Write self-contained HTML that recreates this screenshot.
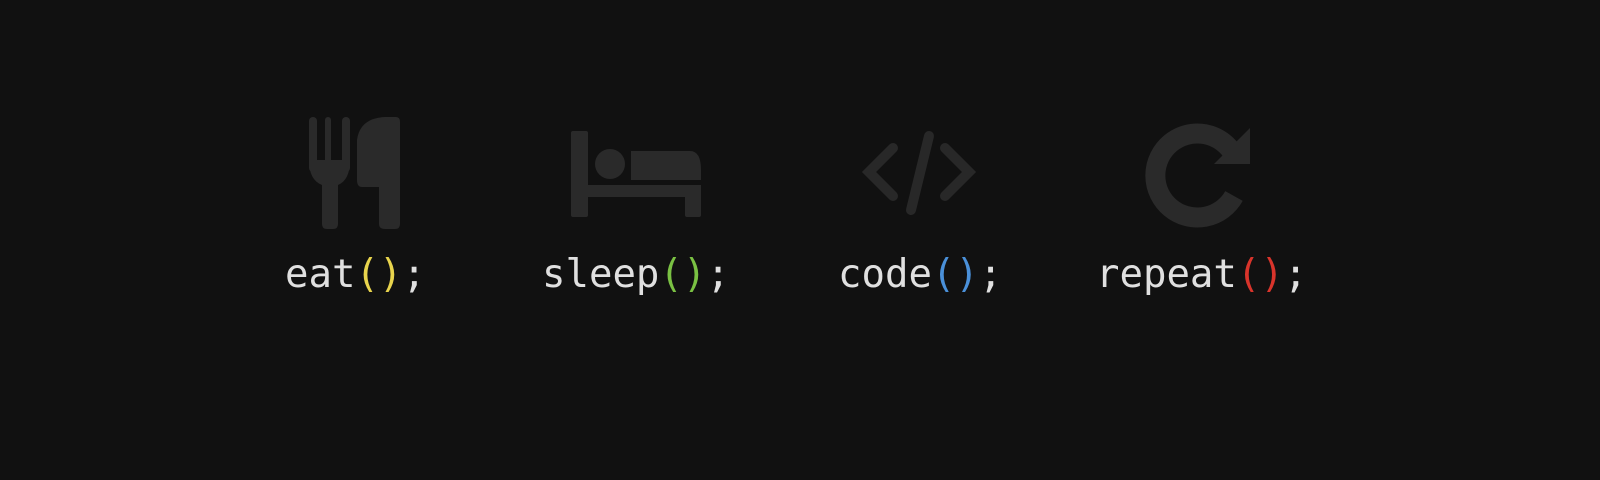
<!DOCTYPE html>
<html><head><style>
html,body{margin:0;padding:0;background:#111111;width:1600px;height:480px;overflow:hidden}
.t{position:absolute;top:252px;font-family:"DejaVu Sans Mono","Liberation Mono",monospace;font-size:39px;color:#e0e0e0;line-height:46px;white-space:pre}
svg{position:absolute;left:0;top:0}
</style></head><body>
<svg width="1600" height="480" fill="#2a2a2a">
<rect x="309" y="117" width="8" height="55" rx="4"/>
<rect x="325" y="117" width="6" height="50" rx="3"/>
<rect x="342" y="117" width="8" height="55" rx="4"/>
<path d="M309 160 Q309 180 322 185 L322 224 Q322 229 327 229 L333 229 Q338 229 338 224 L338 185 Q350 180 350 160 Z"/>
<path d="M357 180 L357 140 Q360 118 385 117 L396 117 Q400 117 400 122 L400 224 Q400 229 395 229 L385 229 Q379 229 379 224 L379 187 L362 187 Q357 187 357 180 Z"/>
<rect x="571" y="131" width="17" height="86" rx="2"/>
<circle cx="610" cy="164" r="15"/>
<path d="M631 151 L690 151 Q701 151 701 170 L701 180 L631 180 Z"/>
<rect x="588" y="185" width="113" height="12"/>
<rect x="685" y="185" width="16" height="32" rx="2"/>
<g stroke="#282828" stroke-width="10" stroke-linecap="round" fill="none">
<path d="M893 148 L869 172 L893 196"/>
<path d="M945 148 L969 172 L945 196"/>
<path d="M929 136 L911 210"/>
</g>
<path d="M1234 155 A42 42 0 1 0 1234 196" stroke="#2a2a2a" stroke-width="20" fill="none"/>
<path d="M1250 128 L1250 164 L1214 164 Z"/>
</svg>
<div class="t" style="left:285px">eat<span style="color:#e8d44d">()</span>;</div>
<div class="t" style="left:542px">sleep<span style="color:#7ac143">()</span>;</div>
<div class="t" style="left:838px">code<span style="color:#4a90d9">()</span>;</div>
<div class="t" style="left:1096px">repeat<span style="color:#d9342b">()</span>;</div>
</body></html>
